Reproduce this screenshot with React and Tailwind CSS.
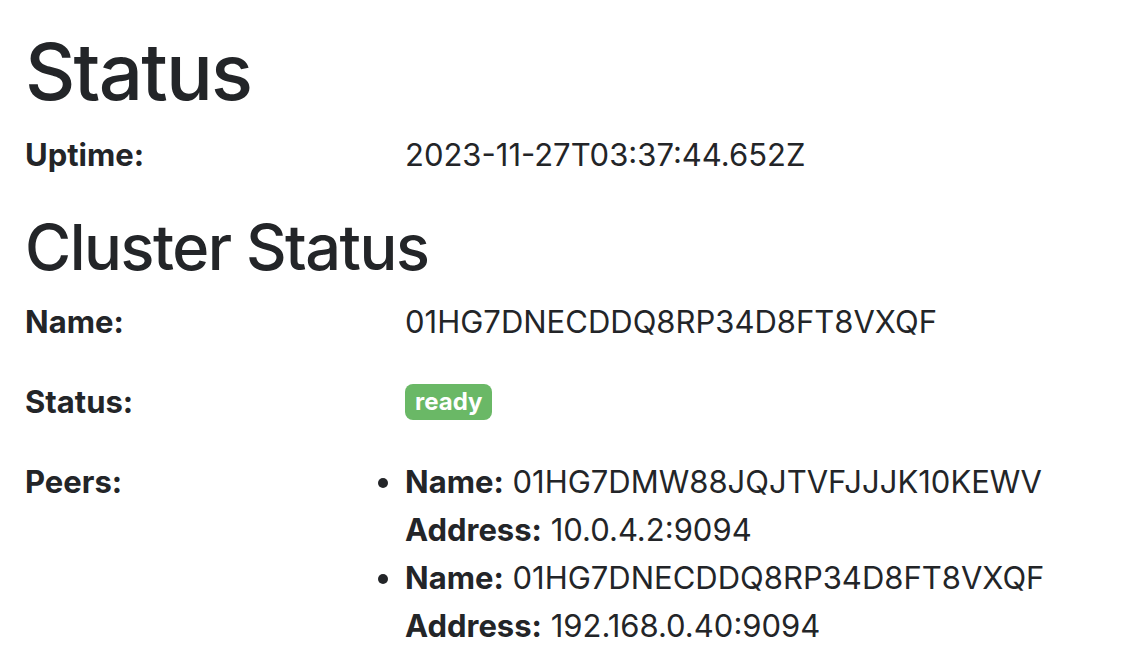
export default function App() {
  const font = { fontFamily: 'Inter, "Noto Sans", "Liberation Sans", sans-serif' };
  return (
    <div className="min-h-[660px] w-[1136px] bg-white pl-[25px] pt-[24px] text-[#232528]" style={font}>
      <h1 className="text-[78px] leading-[96px] font-medium tracking-[-1.8px]">Status</h1>
      <div className="mt-[11px] flex text-[31px] leading-[48px]">
        <b className="w-[380px] font-bold">Uptime:</b>
        <span>2023-11-27T03:37:44.652Z</span>
      </div>
      <h2 className="mt-[30px] text-[63px] leading-[76px] font-medium tracking-[-1.5px]">Cluster Status</h2>
      <div className="mt-[13px] flex text-[31px] leading-[48px]">
        <b className="w-[380px] font-bold">Name:</b>
        <span>01HG7DNECDDQ8RP34D8FT8VXQF</span>
      </div>
      <div className="mt-[32px] flex text-[31px] leading-[48px]">
        <b className="w-[380px] font-bold">Status:</b>
        <div className="flex items-center">
          <span className="rounded-[8px] bg-[#6ab866] px-[10px] text-[24px] leading-[36px] font-bold text-white">ready</span>
        </div>
      </div>
      <div className="mt-[32px] flex text-[31px] leading-[48px]">
        <b className="w-[380px] font-bold">Peers:</b>
        <ul className="list-disc pl-0 marker:text-[#232528]">
          <li>
            <b>Name:</b> 01HG7DMW88JQJTVFJJJK10KEWV
            <br />
            <b>Address:</b> 10.0.4.2:9094
          </li>
          <li>
            <b>Name:</b> 01HG7DNECDDQ8RP34D8FT8VXQF
            <br />
            <b>Address:</b> 192.168.0.40:9094
          </li>
        </ul>
      </div>
    </div>
  );
}
